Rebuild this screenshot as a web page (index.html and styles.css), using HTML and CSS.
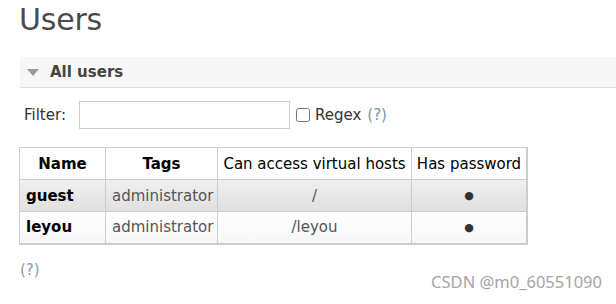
FILE: index.html
```html
<!DOCTYPE html>
<html lang="en">
<head>
    <meta charset="UTF-8">
    <title>Users</title>
    <link rel="stylesheet" href="styles.css">
</head>
<body>
    <h1>Users</h1>
    <div class="section">
        <h2><span class="arrow"></span>All users</h2>
        <div class="filter">
            <label for="filter">Filter:</label>
            <input type="text" id="filter">
            <input type="checkbox" id="regex">
            <label for="regex">Regex</label>
            <span class="help">(?)</span>
        </div>
        <table class="list">
            <colgroup>
                <col class="c-name">
                <col class="c-tags">
                <col class="c-vhosts">
                <col class="c-pass">
            </colgroup>
            <thead>
                <tr>
                    <th>Name</th>
                    <th>Tags</th>
                    <th class="plain">Can access virtual hosts</th>
                    <th class="plain">Has password</th>
                </tr>
            </thead>
            <tbody>
                <tr class="alt1">
                    <td class="name">guest</td>
                    <td>administrator</td>
                    <td class="c">/</td>
                    <td class="c dot">&#9679;</td>
                </tr>
                <tr class="alt2">
                    <td class="name">leyou</td>
                    <td>administrator</td>
                    <td class="c">/leyou</td>
                    <td class="c dot">&#9679;</td>
                </tr>
            </tbody>
        </table>
        <p class="help foot">(?)</p>
    </div>
    <div class="mark">CSDN @m0_60551090</div>
</body>
</html>
```

FILE: styles.css
```css
* {
    margin: 0;
    padding: 0;
    box-sizing: border-box;
}
body {
    font-family: "DejaVu Sans", Verdana, sans-serif;
    font-size: 15px;
    color: #444;
    background: #fff;
    padding: 0 0 0 20px;
    position: relative;
    height: 304px;
}
h1 {
    font-size: 30px;
    font-weight: normal;
    color: #4a4a4a;
    line-height: 40px;
    margin-left: -1px;
    letter-spacing: -0.2px;
}
h2 {
    margin-top: 17px;
    height: 31px;
    background: #f7f7f7;
    border-bottom: 1px solid #ddd;
    font-size: 15px;
    font-weight: bold;
    color: #444;
    display: flex;
    align-items: center;
    padding-left: 7px;
}
.arrow {
    width: 0;
    height: 0;
    border-left: 6px solid transparent;
    border-right: 6px solid transparent;
    border-top: 7px solid #999;
    margin-right: 11px;
    margin-top: 1px;
}
.filter {
    display: flex;
    align-items: center;
    margin-top: 13px;
    padding-left: 4px;
    color: #333;
}
.filter input[type=text] {
    width: 211px;
    height: 28px;
    border: 1px solid #ccc;
    margin-left: 13px;
}
.filter input[type=checkbox] {
    width: 14px;
    height: 14px;
    margin: 0 5px 0 6px;
}
.help {
    color: #7d93ae;
    margin-left: 6px;
}
table.list {
    border-collapse: collapse;
    table-layout: fixed;
    margin-top: 18px;
    margin-left: -1px;
    width: 509px;
    border: 1px solid #ccc;
    border-right-width: 2px;
    border-bottom-width: 2px;
}
.c-name { width: 86px; }
.c-tags { width: 112px; }
.c-vhosts { width: 194px; }
th, td {
    border: 1px solid #ccc;
    height: 32px;
    padding: 0 6px;
    white-space: nowrap;
}
th {
    color: #000;
    background: #fff;
    text-align: center;
}
th.plain {
    font-weight: normal;
    padding: 0 3px;
}
td {
    color: #555;
}
td.name {
    font-weight: bold;
    color: #000;
}
td.c {
    text-align: center;
}
td.dot {
    font-size: 11px;
    color: #333;
}
tr.alt1 {
    background: linear-gradient(#f0f0f0, #e0e0e0);
}
tr.alt2 {
    background: linear-gradient(#ffffff, #f6f6f6);
}
.foot {
    margin: 16px 0 0 0;
    color: #8a9aae;
}
.mark {
    position: absolute;
    right: 14px;
    bottom: 11px;
    font-family: "Noto Sans", "Open Sans", sans-serif;
    font-size: 16.5px;
    color: #a5a5a5;
}
```
